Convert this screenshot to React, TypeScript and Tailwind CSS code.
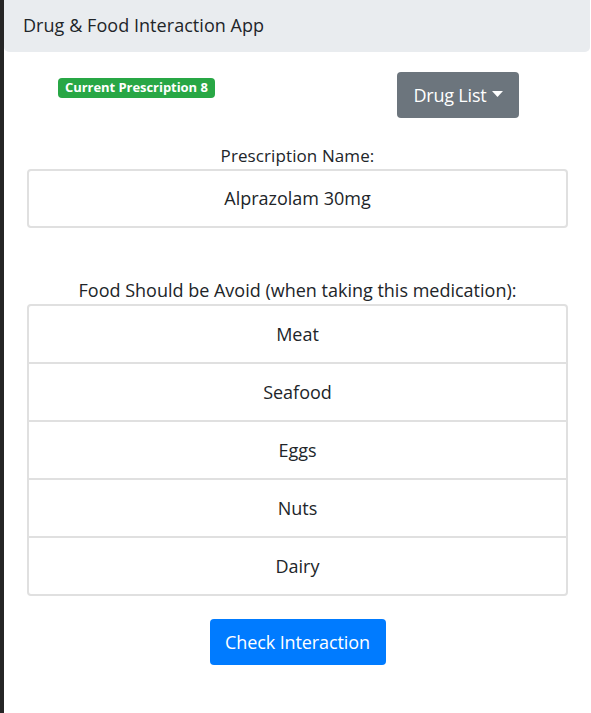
export default function App() {
  const foods = ["Meat", "Seafood", "Eggs", "Nuts", "Dairy"];

  return (
    <div className="min-h-[713px] flex bg-white text-[#212529]" style={{ fontFamily: '"Open Sans", "Noto Sans", sans-serif' }}>
      {/* left dark strip */}
      <div className="w-[4px] bg-[#252525] shrink-0" />

      <div className="flex-1 flex flex-col">
        {/* Header */}
        <div className="h-[52px] bg-[#e9ecef] rounded-b-[5px] mr-[1px] flex items-center pl-[19px] pb-[1px] text-[18px] tracking-[0.05px]">
          Drug &amp; Food Interaction App
        </div>

        {/* Badge + dropdown */}
        <div className="flex items-start mt-[20px]">
          <div className="w-[393px] pl-[54px] pt-[6px] flex">
            <span className="flex items-center h-[20px] px-[7px] pb-[1px] rounded-[4px] bg-[#28a745] text-white text-[13px] font-bold tracking-[-0.05px]">
              Current Prescription 8
            </span>
          </div>
          <button className="h-[46px] w-[122px] rounded-[4px] bg-[#6c757d] text-white text-[18px] flex items-center justify-center gap-[5px] tracking-[-0.2px]">
            Drug List
            <svg width="11" height="6" viewBox="0 0 11 6" className="mt-[-2px]">
              <path d="M0 0 L11 0 L5.5 6 Z" fill="white" />
            </svg>
          </button>
        </div>

        {/* Prescription name */}
        <div className="px-[23px] mt-[26px] flex flex-col items-center">
          <div className="text-[17px] leading-[24px] tracking-[0.1px]">Prescription Name:</div>
          <div className="w-full h-[59px] mt-[1px] border-2 border-[#e0e0e0] rounded-[4px] flex items-center justify-center text-[18px]">
            Alprazolam 30mg
          </div>

          <div className="mt-[50px] text-[18px] leading-[24px]">
            Food Should be Avoid (when taking this medication):
          </div>
          <div className="w-full mt-[2px] border-2 border-[#e0e0e0] rounded-[4px] flex flex-col">
            {foods.map((f, i) => (
              <div
                key={f}
                className={
                  i === 0
                    ? "h-[56px] flex items-center justify-center text-[18px]"
                    : "h-[58px] border-t-2 border-[#e0e0e0] flex items-center justify-center text-[18px]"
                }
              >
                {f}
              </div>
            ))}
          </div>

          <button className="mt-[23px] h-[46px] w-[176px] rounded-[4px] bg-[#007bff] text-white text-[18px] tracking-[-0.1px]">
            Check Interaction
          </button>
        </div>
      </div>
    </div>
  );
}
